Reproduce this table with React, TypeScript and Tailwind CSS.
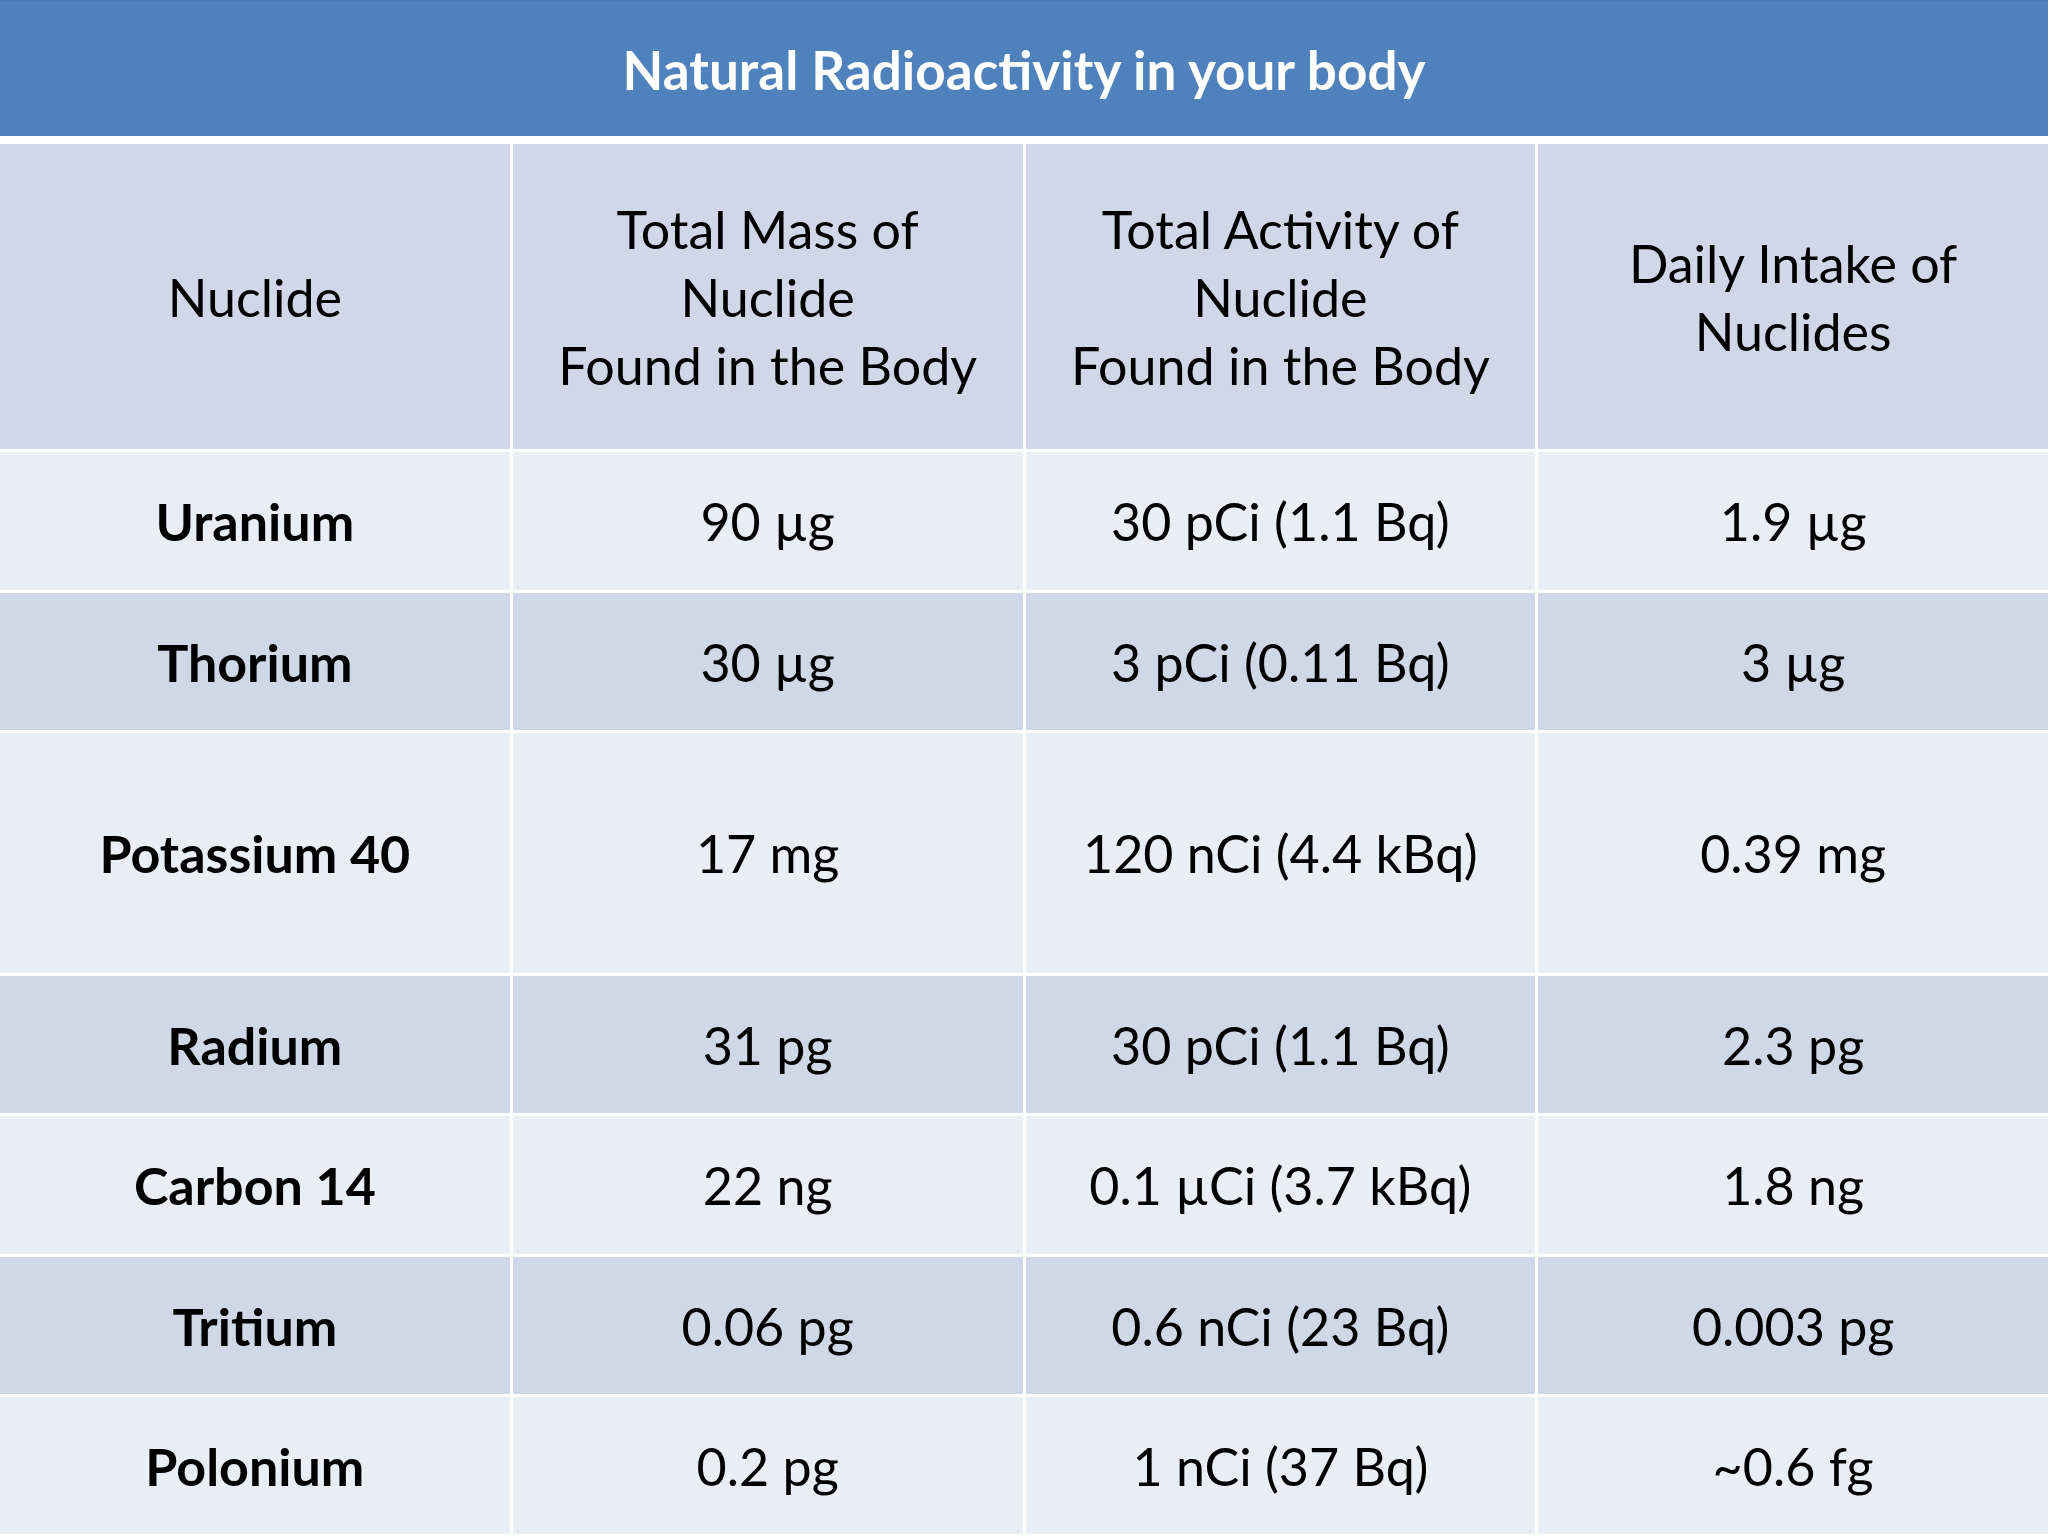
import React from "react";

const rows: { name: string; mass: string; activity: string; intake: string; h: string; dark: boolean }[] = [
  { name: "Uranium", mass: "90 µg", activity: "30 pCi (1.1 Bq)", intake: "1.9 µg", h: "h-[138px]", dark: false },
  { name: "Thorium", mass: "30 µg", activity: "3 pCi (0.11 Bq)", intake: "3 µg", h: "h-[137px]", dark: true },
  { name: "Potassium 40", mass: "17 mg", activity: "120 nCi (4.4 kBq)", intake: "0.39 mg", h: "h-[240px]", dark: false },
  { name: "Radium", mass: "31 pg", activity: "30 pCi (1.1 Bq)", intake: "2.3 pg", h: "h-[137px]", dark: true },
  { name: "Carbon 14", mass: "22 ng", activity: "0.1 µCi (3.7 kBq)", intake: "1.8 ng", h: "h-[138px]", dark: false },
  { name: "Tritium", mass: "0.06 pg", activity: "0.6 nCi (23 Bq)", intake: "0.003 pg", h: "h-[137px]", dark: true },
  { name: "Polonium", mass: "0.2 pg", activity: "1 nCi (37 Bq)", intake: "~0.6 fg", h: "h-[137px]", dark: false },
];

function Cell({ children, className }: { children: React.ReactNode; className: string }) {
  return (
    <div className={`flex items-center justify-center text-center ${className}`}>
      <div>{children}</div>
    </div>
  );
}

export default function App() {
  return (
    <div className="w-[2048px] h-[1536px] bg-white overflow-hidden font-['Lato',sans-serif] text-black">
      <div className="h-[136px] bg-[#4F81BD] border-t-2 border-[#4a7ab3] flex items-center justify-center">
        <span className="text-white font-bold text-[53px] leading-none">
          Natural Radioactivity in your body
        </span>
      </div>
      <div className="mt-[8px] grid grid-cols-4 gap-[3px] text-[52px] leading-[68px]">
        <Cell className="h-[305px] bg-[#D0D7E8]">Nuclide</Cell>
        <Cell className="h-[305px] bg-[#D0D7E8]">
          Total Mass of
          <br />
          Nuclide
          <br />
          Found in the Body
        </Cell>
        <Cell className="h-[305px] bg-[#D0D7E8]">
          Total Activity of
          <br />
          Nuclide
          <br />
          Found in the Body
        </Cell>
        <Cell className="h-[305px] bg-[#D0D7E8]">
          Daily Intake of
          <br />
          Nuclides
        </Cell>
        {rows.map((r) => {
          const bg = r.dark ? "bg-[#CFD8E7]" : "bg-[#E9EDF4]";
          return (
            <React.Fragment key={r.name}>
              <Cell className={`${r.h} ${bg} font-bold`}>{r.name}</Cell>
              <Cell className={`${r.h} ${bg}`}>{r.mass}</Cell>
              <Cell className={`${r.h} ${bg}`}>{r.activity}</Cell>
              <Cell className={`${r.h} ${bg}`}>{r.intake}</Cell>
            </React.Fragment>
          );
        })}
      </div>
    </div>
  );
}
